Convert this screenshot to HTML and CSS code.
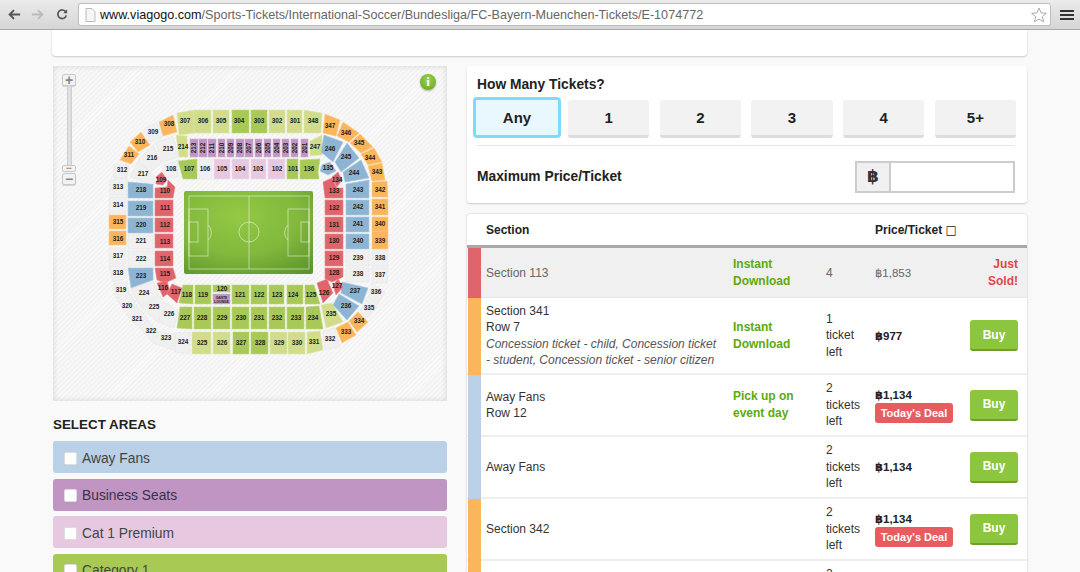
FILE: index.html
```html
<!DOCTYPE html>
<html lang="en">
<head>
<meta charset="utf-8">
<title>FC Bayern Muenchen Tickets</title>
<link rel="stylesheet" href="styles.css">
</head>
<body>
<header class="toolbar">
  <svg class="nav-icon" viewBox="0 0 16 14"><path class="arrow-dark" d="M15 7H4M8 2 3 7l5 5"/></svg>
  <svg class="nav-icon" viewBox="0 0 16 14"><path class="arrow-light" d="M1 7h11M8 2l5 5-5 5"/></svg>
  <svg class="nav-icon reload" viewBox="0 0 14 14"><path class="arrow-dark thin" d="M11.5 4.2A5 5 0 1 0 12 8"/><path class="fill-dark" d="M8.5 5.5 13 1v4.500z"/></svg>
  <div class="urlbar">
    <svg class="file-icon" viewBox="0 0 11 14"><path d="M1 .5h6l3 3v10H1z"/></svg>
    <span class="url"><b>www.viagogo.com</b>/Sports-Tickets/International-Soccer/Bundesliga/FC-Bayern-Muenchen-Tickets/E-1074772</span>
    <svg class="star-icon" viewBox="0 0 16 16"><path d="M8 1l2.100 4.800 5.200.5-3.900 3.400 1.200 5.100L8 12.100l-4.600 2.700 1.200-5.100L.7 6.300l5.200-.5z"/></svg>
  </div>
  <div class="menu"><i></i><i></i><i></i></div>
</header>

<div class="top-card"></div>

<main class="columns">
  <section class="left">
    <div class="map">
      <div class="zoomer">
        <div class="zoom-btn">+</div>
        <div class="zoom-track"></div>
        <div class="zoom-handle">•••</div>
        <div class="zoom-btn minus">−</div>
      </div>
      <div class="info">i</div>
      <svg class="stadium" viewBox="53 66 394 335">
        <defs>
          <radialGradient id="turf" cx="0.42" cy="0.3" r="0.85">
            <stop offset="0" stop-color="#93c943"/>
            <stop offset="0.55" stop-color="#82b83c"/>
            <stop offset="1" stop-color="#5d962c"/>
          </radialGradient>
        </defs>
        <rect x="184" y="191" width="129" height="83" rx="2" fill="url(#turf)"/>
        <g class="lines">
          <rect x="189" y="196" width="120" height="73"/>
          <path d="M249 196v73"/>
          <circle cx="249" cy="232" r="10"/>
          <rect x="189" y="209" width="19" height="47"/>
          <rect x="189" y="222" width="9" height="20"/>
          <path d="M208 225a10 10 0 0 1 0 15"/>
          <rect x="288" y="209" width="21" height="47"/>
          <rect x="301" y="222" width="8" height="20"/>
          <path d="M288 225a10 10 0 0 0 0 15"/>
        </g>

        <g class="lg">
          <polygon points="177,113 194,110 195,133 179,135"/>
          <rect x="194" y="110" width="17" height="23"/>
          <rect x="213" y="110" width="16" height="23"/>
          <rect x="269" y="110" width="16" height="23"/>
          <rect x="287" y="110" width="15" height="23"/>
          <polygon points="304,110 322,113 321,133 304,133"/>
          <polygon points="176,135 187,136 188,157 179,157"/>
          <polygon points="322,135 322,155 310,156 310,141"/>
          <rect x="192" y="332" width="19" height="22"/>
          <rect x="213" y="332" width="17" height="22"/>
          <rect x="270" y="332" width="17" height="22"/>
          <rect x="288" y="332" width="17" height="22"/>
          <polygon points="307,332 320,331 323,350 307,354"/>
          <polygon points="332,303 343,322 326,328 321,305"/>
        </g>
        <g class="mg">
          <rect x="232" y="110" width="17" height="23"/>
          <rect x="251" y="110" width="16" height="23"/>
          <polygon points="178,161 197,159 197,179 183,179 182,175"/>
          <rect x="287" y="159" width="11" height="20"/>
          <polygon points="300,160 320,159 318,172 319,179 300,179"/>
          <rect x="233" y="332" width="16" height="22"/>
          <rect x="251" y="332" width="17" height="22"/>
          <polygon points="177,328 180,307 192,307 192,329"/>
          <rect x="194" y="307" width="17" height="22"/>
          <rect x="213" y="307" width="17" height="22"/>
          <rect x="232" y="307" width="17" height="22"/>
          <rect x="251" y="307" width="16" height="22"/>
          <rect x="269" y="307" width="16" height="22"/>
          <rect x="287" y="307" width="17" height="22"/>
          <polygon points="306,307 319,306 323,329 306,329"/>
          <polygon points="179,303 183,285 193,285 193,304"/>
          <rect x="195" y="285" width="16" height="19"/>
          <rect x="213" y="285" width="17" height="7"/>
          <rect x="232" y="285" width="17" height="19"/>
          <rect x="251" y="285" width="16" height="19"/>
          <rect x="269" y="285" width="15" height="19"/>
          <rect x="287" y="285" width="16" height="19"/>
          <polygon points="305,285 314,285 320,304 305,304"/>
        </g>
        <g class="pu">
          <rect x="190" y="139" width="8" height="18"/>
          <rect x="199" y="139" width="8" height="18"/>
          <rect x="208" y="139" width="8" height="18"/>
          <rect x="218" y="139" width="7" height="18"/>
          <rect x="227" y="139" width="7" height="18"/>
          <rect x="236" y="139" width="8" height="18"/>
          <rect x="245" y="139" width="8" height="18"/>
          <rect x="255" y="139" width="7" height="18"/>
          <rect x="264" y="139" width="7" height="18"/>
          <rect x="273" y="139" width="7" height="18"/>
          <rect x="282" y="139" width="7" height="18"/>
          <rect x="291" y="139" width="7" height="18"/>
          <rect x="301" y="139" width="7" height="18"/>
          <rect x="213" y="294" width="17" height="10"/>
        </g>
        <g class="pk">
          <rect x="214" y="159" width="16" height="20"/>
          <rect x="232" y="159" width="17" height="20"/>
          <rect x="251" y="159" width="15" height="20"/>
          <rect x="268" y="159" width="17" height="20"/>
        </g>
        <g class="or">
          <polygon points="159,122 173,115 177,132 163,136"/>
          <polygon points="130,142 141,132 150,145 138,152"/>
          <polygon points="120,160 129,146 139,154 131,164"/>
          <rect x="109" y="215" width="17" height="14"/>
          <rect x="109" y="231" width="17" height="14"/>
          <polygon points="336,328 348,322 356,335 342,343"/>
          <polygon points="349,321 358,312 368,322 357,332"/>
          <rect x="372" y="231" width="16" height="18"/>
          <rect x="372" y="217" width="16" height="14"/>
          <rect x="372" y="199" width="16" height="16"/>
          <polygon points="372,182 387,181 388,197 372,197"/>
          <polygon points="368,166 382,163 385,180 372,181"/>
          <polygon points="361,154 374,148 382,162 368,165"/>
          <polygon points="350,143 360,134 373,147 361,153"/>
          <polygon points="337,136 343,122 359,133 349,142"/>
          <polygon points="323,133 325,114 340,120 336,136"/>
        </g>
        <g class="bl">
          <polygon points="324,135 343,142 333,162 321,152"/>
          <polygon points="335,162 347,143 359,158 341,172"/>
          <polygon points="343,172 361,160 369,178 345,182"/>
          <polygon points="346,184 369,180 369,198 346,198"/>
          <rect x="346" y="200" width="23" height="15"/>
          <rect x="346" y="217" width="23" height="15"/>
          <rect x="346" y="234" width="23" height="15"/>
          <polygon points="342,282 368,288 362,304 341,293"/>
          <polygon points="339,294 359,306 347,320 333,305"/>
          <polygon points="322,165 330,162 336,171 328,175 320,171"/>
          <polygon points="128,182 153,184 153,198 128,198"/>
          <rect x="128" y="201" width="25" height="15"/>
          <rect x="128" y="218" width="25" height="15"/>
          <polygon points="128,268 153,268 153,280 131,288"/>
        </g>
        <g class="re">
          <polygon points="156,177 162,172 167,180 163,185 156,184"/>
          <polygon points="155,188 167,187 168,180 175,187 173,198 155,198"/>
          <rect x="155" y="200" width="18" height="16"/>
          <rect x="155" y="218" width="18" height="14"/>
          <rect x="155" y="234" width="18" height="14"/>
          <rect x="155" y="251" width="18" height="15"/>
          <polygon points="155,268 173,268 176,278 165,283 157,280"/>
          <polygon points="157,283 167,281 170,292 163,297"/>
          <polygon points="172,284 182,288 177,303 167,294"/>
          <polygon points="332,177 338,172 342,180 337,187"/>
          <polygon points="323,182 332,178 337,188 343,188 343,198 325,198"/>
          <rect x="325" y="200" width="18" height="15"/>
          <rect x="325" y="217" width="18" height="15"/>
          <rect x="325" y="234" width="18" height="15"/>
          <rect x="325" y="251" width="18" height="15"/>
          <polygon points="325,268 343,268 343,277 332,282 325,279"/>
          <polygon points="333,285 338,279 343,287 336,295"/>
          <polygon points="317,283 327,279 333,293 323,303"/>
        </g>
        <g class="gr">
          <polygon points="143,130 157,122 163,137 150,142"/>
          <polygon points="114,164 129,165 127,177 113,178"/>
          <polygon points="110,180 127,178 127,195 110,195"/>
          <rect x="109" y="197" width="17" height="16"/>
          <rect x="109" y="248" width="17" height="16"/>
          <polygon points="109,266 126,266 127,278 113,282"/>
          <polygon points="113,284 127,281 129,292 117,299"/>
          <polygon points="118,301 130,293 137,305 125,312"/>
          <polygon points="126,314 137,306 147,318 137,326"/>
          <polygon points="139,327 148,320 158,332 152,342"/>
          <polygon points="153,343 160,332 175,334 173,350"/>
          <polygon points="175,333 190,332 190,354 175,352"/>
          <polygon points="323,331 335,328 340,347 325,350"/>
          <polygon points="360,310 367,300 377,307 367,318"/>
          <polygon points="368,298 372,284 385,292 377,305"/>
          <polygon points="372,268 388,268 387,283 372,283"/>
          <rect x="372" y="250" width="16" height="16"/>
          <rect x="346" y="251" width="23" height="15"/>
          <rect x="346" y="268" width="23" height="14"/>
          <polygon points="155,143 173,136 178,157 163,162"/>
          <polygon points="138,160 153,145 162,163 150,172"/>
          <polygon points="130,177 138,162 150,172 158,180 151,184"/>
          <polygon points="164,165 178,160 178,177 168,178 162,172"/>
          <rect x="199" y="159" width="13" height="20"/>
          <rect x="128" y="235" width="25" height="14"/>
          <rect x="128" y="251" width="25" height="15"/>
          <polygon points="131,289 153,281 159,295 140,306"/>
          <polygon points="141,307 160,296 167,305 157,322"/>
          <polygon points="158,322 167,303 178,311 174,328"/>
        </g>

        <g class="labels">
          <text x="185" y="123">307</text><text x="203" y="123">306</text><text x="221" y="123">305</text><text x="239" y="123">304</text><text x="259" y="123">303</text><text x="277" y="123">302</text><text x="295" y="123">301</text><text x="313" y="123">348</text>
          <text x="169" y="126">308</text><text x="153" y="134">309</text><text x="140" y="144">310</text><text x="129" y="157">311</text><text x="122" y="172">312</text><text x="118" y="189">313</text><text x="118" y="207">314</text><text x="118" y="224">315</text><text x="118" y="241">316</text><text x="118" y="258">317</text><text x="118" y="275">318</text><text x="121" y="292">319</text><text x="127" y="308">320</text><text x="137" y="321">321</text><text x="151" y="333">322</text><text x="166" y="340">323</text><text x="183" y="344">324</text>
          <text x="202" y="345">325</text><text x="222" y="345">326</text><text x="241" y="345">327</text><text x="260" y="345">328</text><text x="279" y="345">329</text><text x="297" y="345">330</text><text x="314" y="344">331</text><text x="330" y="341">332</text><text x="346" y="334">333</text><text x="359" y="323">334</text><text x="369" y="310">335</text><text x="376" y="294">336</text><text x="380" y="277">337</text><text x="380" y="260">338</text><text x="380" y="243">339</text><text x="380" y="226">340</text><text x="380" y="209">341</text><text x="380" y="192">342</text><text x="377" y="174">343</text><text x="370" y="160">344</text><text x="359" y="145">345</text><text x="346" y="135">346</text><text x="330" y="128">347</text>
          <text x="183" y="149">214</text><text x="168" y="151">215</text><text x="152" y="160">216</text><text x="143" y="176">217</text><text x="141" y="192">218</text><text x="141" y="210">219</text><text x="141" y="227">220</text><text x="141" y="243">221</text><text x="141" y="261">222</text><text x="141" y="278">223</text><text x="144" y="295">224</text><text x="154" y="309">225</text><text x="169" y="316">226</text><text x="185" y="320">227</text><text x="202" y="320">228</text><text x="222" y="320">229</text><text x="241" y="320">230</text><text x="259" y="320">231</text><text x="277" y="320">232</text><text x="296" y="320">233</text><text x="313" y="320">234</text><text x="331" y="316">235</text><text x="346" y="308">236</text><text x="355" y="293">237</text><text x="358" y="276">238</text><text x="358" y="260">239</text><text x="358" y="243">240</text><text x="358" y="226">241</text><text x="358" y="209">242</text><text x="358" y="192">243</text><text x="354" y="175">244</text><text x="346" y="159">245</text><text x="330" y="151">246</text><text x="315" y="149">247</text>
          <text x="189" y="171">107</text><text x="171" y="171">108</text><text x="205" y="171">106</text><text x="222" y="171">105</text><text x="240" y="171">104</text><text x="258" y="171">103</text><text x="277" y="171">102</text><text x="293" y="171">101</text><text x="309" y="171">136</text><text x="328" y="170">135</text><text x="337" y="182">134</text><text x="334" y="193">133</text><text x="334" y="210">132</text><text x="334" y="227">131</text><text x="334" y="243">130</text><text x="334" y="260">129</text><text x="334" y="275">128</text><text x="337" y="288">127</text><text x="324" y="295">126</text><text x="311" y="297">125</text><text x="293" y="297">124</text><text x="277" y="297">123</text><text x="259" y="297">122</text><text x="240" y="297">121</text><text x="222" y="291">120</text><text x="203" y="297">119</text><text x="187" y="297">118</text><text x="176" y="294">117</text><text x="163" y="290">116</text><text x="165" y="276">115</text><text x="165" y="261">114</text><text x="165" y="244">113</text><text x="165" y="227">112</text><text x="165" y="210">111</text><text x="165" y="193">110</text><text x="161" y="182">109</text>
        </g>
        <g class="labels small">
          <text x="221.500" y="298.500">GÄSTE</text><text x="221.500" y="302.500">LOUNGE</text>
        </g>
        <g class="labels">
          <text transform="translate(196 148) rotate(-90)">213</text><text transform="translate(205 148) rotate(-90)">212</text><text transform="translate(214 148) rotate(-90)">211</text><text transform="translate(223.500 148) rotate(-90)">210</text><text transform="translate(232.500 148) rotate(-90)">209</text><text transform="translate(242 148) rotate(-90)">208</text><text transform="translate(251 148) rotate(-90)">207</text><text transform="translate(260.500 148) rotate(-90)">206</text><text transform="translate(269.500 148) rotate(-90)">205</text><text transform="translate(278.500 148) rotate(-90)">204</text><text transform="translate(287.500 148) rotate(-90)">203</text><text transform="translate(296.500 148) rotate(-90)">202</text><text transform="translate(306.500 148) rotate(-90)">201</text>
        </g>
      </svg>
    </div>
    <h2 class="areas-title">SELECT AREAS</h2>
    <ul class="areas">
      <li class="area area-away"><span class="check"></span>Away Fans</li>
      <li class="area area-business"><span class="check"></span>Business Seats</li>
      <li class="area area-premium"><span class="check"></span>Cat 1 Premium</li>
      <li class="area area-cat1"><span class="check"></span>Category 1</li>
    </ul>
  </section>

  <section class="right">
    <div class="filters">
      <h2 class="filter-title">How Many Tickets?</h2>
      <div class="qty-buttons">
        <button class="qty qty-active">Any</button>
        <button class="qty">1</button>
        <button class="qty">2</button>
        <button class="qty">3</button>
        <button class="qty">4</button>
        <button class="qty">5+</button>
      </div>
      <div class="price-filter">
        <span class="filter-title">Maximum Price/Ticket</span>
        <div class="price-input"><span class="addon">฿</span><span class="field"></span></div>
      </div>
    </div>

    <div class="listing">
      <div class="row head">
        <div class="c-section">Section</div>
        <div class="c-price">Price/Ticket <span class="boxglyph">□</span></div>
      </div>
      <div class="row sold strip-red">
        <div class="c-section">Section 113</div>
        <div class="c-delivery">Instant Download</div>
        <div class="c-qty">4</div>
        <div class="c-price">฿1,853</div>
        <div class="c-action just-sold">Just Sold!</div>
      </div>
      <div class="row tall strip-orange">
        <div class="c-section">Section 341<br>Row 7<br><em>Concession ticket - child, Concession ticket - student, Concession ticket - senior citizen</em></div>
        <div class="c-delivery">Instant Download</div>
        <div class="c-qty">1 ticket left</div>
        <div class="c-price"><strong>฿977</strong></div>
        <div class="c-action"><button class="buy">Buy</button></div>
      </div>
      <div class="row strip-blue">
        <div class="c-section">Away Fans<br>Row 12</div>
        <div class="c-delivery">Pick up on event day</div>
        <div class="c-qty">2 tickets left</div>
        <div class="c-price"><strong>฿1,134</strong><span class="deal">Today's Deal</span></div>
        <div class="c-action"><button class="buy">Buy</button></div>
      </div>
      <div class="row strip-blue">
        <div class="c-section">Away Fans</div>
        <div class="c-delivery"></div>
        <div class="c-qty">2 tickets left</div>
        <div class="c-price"><strong>฿1,134</strong></div>
        <div class="c-action"><button class="buy">Buy</button></div>
      </div>
      <div class="row strip-orange">
        <div class="c-section">Section 342</div>
        <div class="c-delivery"></div>
        <div class="c-qty">2 tickets left</div>
        <div class="c-price"><strong>฿1,134</strong><span class="deal">Today's Deal</span></div>
        <div class="c-action"><button class="buy">Buy</button></div>
      </div>
      <div class="row strip-orange">
        <div class="c-section"></div>
        <div class="c-delivery"></div>
        <div class="c-qty">2 tickets left</div>
        <div class="c-price"></div>
        <div class="c-action"></div>
      </div>
    </div>
  </section>
</main>
</body>
</html>
```
FILE: styles.css
```css
* { box-sizing: border-box; }
html, body { margin: 0; height: 572px; overflow: hidden; }
body {
  background: #f9f9f9;
  color: #333;
  font-family: "Liberation Sans", "DejaVu Sans", Arial, sans-serif;
  font-size: 12px;
}

/* browser toolbar */
.toolbar {
  height: 30px;
  display: flex;
  align-items: center;
  padding: 0 0 0 7px;
  background: linear-gradient(#ebebeb, #d5d5d5);
  border-bottom: 1px solid #a9a9a9;
}
.nav-icon { width: 14px; height: 13px; margin-right: 10px; flex: none; }
.reload { width: 12px; margin: 0 10px 0 1px; }
.arrow-dark { fill: none; stroke: #555; stroke-width: 2.2; }
.arrow-dark.thin { stroke-width: 2; }
.arrow-light { fill: none; stroke: #bcbcbc; stroke-width: 2.2; }
.fill-dark { fill: #555; }
.urlbar {
  width: 973px;
  height: 23px;
  flex: none;
  display: flex;
  align-items: center;
  background: #fff;
  border: 1px solid #bdbdbd;
  border-radius: 3px;
  padding: 0 3px 0 6px;
}
.file-icon { width: 11px; height: 14px; fill: #f6f6f6; stroke: #bbb; stroke-width: 1; flex: none; }
.url { margin-left: 4px; font-size: 12.600px; color: #666; white-space: nowrap; flex: 1; }
.url b { font-weight: 400; color: #111; }
.star-icon { width: 16px; height: 16px; fill: #fff; stroke: #aaa; stroke-width: 1; flex: none; }
.menu { margin-left: 9px; width: 14px; display: flex; flex-direction: column; gap: 2px; }
.menu i { height: 2px; background: #333; display: block; }

/* page */
.top-card {
  width: 975px;
  height: 26px;
  margin-left: 52px;
  background: #fff;
  border-radius: 0 0 4px 4px;
  box-shadow: 0 1px 2px rgba(0, 0, 0, .2);
}
.columns { display: flex; gap: 20px; margin: 10px 0 0 53px; align-items: flex-start; }
.left { width: 394px; flex: none; }
.right { width: 560px; flex: none; }

/* map */
.map {
  position: relative;
  height: 335px;
  background: repeating-linear-gradient(135deg, #f3f3f3 0 2px, #f9f9f9 2px 3.500px);
  box-shadow: inset 0 0 6px rgba(0, 0, 0, .14);
}
.stadium { position: absolute; inset: 0; width: 394px; height: 335px; }
.stadium polygon, .stadium rect { stroke-width: .6; }
.lg { fill: #d1dd8d; stroke: #e0e8ad; }
.mg { fill: #a8c957; stroke: #bcd57e; }
.pu { fill: #c095c3; stroke: #d2b3d4; }
.pk { fill: #e6c9e1; stroke: #efdcec; }
.or { fill: #fbb65c; stroke: #fcc987; }
.bl { fill: #8db5d3; stroke: #a9c8df; }
.re { fill: #df656a; stroke: #e88a8e; }
.gr { fill: #f0f0f0; stroke: #e6e6e6; }
.lines rect, .lines circle, .lines path { fill: none; stroke: rgba(255, 255, 255, .55); stroke-width: .9; }
.labels text {
  font-family: "Liberation Sans", Arial, sans-serif;
  font-size: 6.400px;
  font-weight: 700;
  text-anchor: middle;
  fill: #222;
  stroke: none;
}
.labels.small text { font-size: 3.400px; }

.zoomer { position: absolute; left: 9px; top: 8px; width: 14px; z-index: 2; }
.zoom-btn {
  height: 12px;
  background: #f2f2f2;
  border: 1px solid #c8c8c8;
  border-radius: 2px;
  box-shadow: 0 1px 1px rgba(0, 0, 0, .15);
  color: #888;
  font-size: 14px;
  font-weight: 700;
  line-height: 10px;
  text-align: center;
}
.zoom-btn.minus { height: 12px; margin-top: 1px; }
.zoom-track { width: 5px; height: 79px; margin-left: 4.500px; background: #e0e0e0; border: 1px solid #cfcfcf; border-width: 0 1px; }
.zoom-handle {
  height: 7px;
  background: #f2f2f2;
  border: 1px solid #c8c8c8;
  border-radius: 2px;
  color: #777;
  font-size: 5px;
  line-height: 5px;
  text-align: center;
}
.info {
  position: absolute;
  left: 367px;
  top: 8px;
  width: 16px;
  height: 16px;
  border-radius: 50%;
  background: radial-gradient(circle at 50% 35%, #9ad24a, #5fa31f);
  box-shadow: 0 1px 2px rgba(0, 0, 0, .3);
  color: #fff;
  font-family: "Liberation Serif", serif;
  font-size: 13px;
  font-weight: 700;
  line-height: 16px;
  text-align: center;
}

/* areas */
.areas-title { margin: 15.500px 0 0; font-size: 13.400px; line-height: 16px; color: #222; font-weight: 700; }
.areas { list-style: none; margin: 7.500px 0 0; padding: 1px 0 0; display: flex; flex-direction: column; gap: 5.500px; }
.area {
  height: 32px;
  display: flex;
  align-items: center;
  gap: 5.500px;
  padding: 2px 0 0 10.500px;
  border-radius: 3px;
  font-size: 13.800px;
  color: #444;
}
.check { width: 13px; height: 13px; background: #fff; border: 1px solid #ddd; border-radius: 2px; flex: none; }
.area-away { background: #b9d0e6; }
.area-business { background: #c095c3; color: #3c3046; }
.area-premium { background: #e6c9e1; }
.area-cat1 { background: #a9c955; }

/* filters */
.filters {
  height: 137px;
  background: #fff;
  border-radius: 3px;
  box-shadow: 0 1px 2px rgba(0, 0, 0, .2);
  padding: 11px 11px 0 10px;
}
.filter-title { margin: 0; font-size: 13.800px; line-height: 16px; font-weight: 700; color: #222; }
.qty-buttons {
  display: flex;
  gap: 10.500px;
  margin: 4px 0 0 -4px;
  height: 49px;
}
.qty {
  flex: 1;
  height: 38px;
  margin-top: 3px;
  background: #f2f2f2;
  border: 0;
  border-bottom: 3px solid #ddd;
  border-radius: 3px;
  font: 700 15px "Liberation Sans", Arial, sans-serif;
  color: #222;
  padding: 0;
}
.qty-active {
  flex: 0 0 88px;
  height: 41px;
  margin: 0 -3.500px 0 0;
  background: #e9f8fe;
  border: 3px solid #7fdbfb;
  border-radius: 4px;
}
.price-filter {
  display: flex;
  align-items: center;
  justify-content: space-between;
  height: 58px;
  margin: -1px 1px 0 0;
  padding-top: 4px;
  border-top: 1px solid #e8e8e8;
}
.price-input { width: 160px; height: 32px; display: flex; border: 2px solid #ccc; background: #fff; }
.addon {
  width: 34px;
  background: #f0f0f0;
  border-right: 2px solid #ccc;
  font-size: 17px;
  font-weight: 700;
  line-height: 28px;
  text-align: center;
  color: #333;
}
.field { flex: 1; }

/* ticket table */
.listing {
  margin-top: 11px;
  background: #fff;
  border-radius: 3px;
  box-shadow: 0 0 2px rgba(0, 0, 0, .25);
}
.row {
  display: grid;
  grid-template-columns: 247px 93px 49px 95px 1fr;
  align-items: center;
  height: 62px;
  padding: 0 9px 0 19px;
  border-bottom: 2px solid #eee;
  position: relative;
  line-height: 16.500px;
}
.row::before { content: ""; position: absolute; left: 1px; top: 0; bottom: -2px; width: 13px; }
.strip-red::before { background: #e0656a; }
.strip-orange::before { background: #fbb65c; }
.strip-blue::before { background: #b9d0e6; }
.head {
  height: 34px;
  padding-top: 1px;
  border-bottom: 3px solid #a8a8a8;
  font-weight: 700;
  color: #222;
  grid-template-columns: 389px 1fr;
  border-radius: 3px 3px 0 0;
}
.sold { height: 50px; background: #f0f0f0; color: #666; border-bottom: 1px solid #e8e8e8; }
.tall { height: 77px; }
.c-section { padding-right: 14px; }
.c-section em { color: #555; }
.sold .c-section, .sold .c-qty, .sold .c-price { padding-top: 1px; }
.c-delivery { color: #5cab0c; font-weight: 700; line-height: 17px; padding-right: 8px; }
.c-qty { width: min-content; line-height: 16.500px; }
.c-price { display: flex; flex-direction: column; align-items: flex-start; font-size: 11.500px; line-height: 14px; }
.head .c-price { display: block; font-size: 12px; }
.c-price strong { color: #222; }
.boxglyph { font-weight: 400; font-family: "DejaVu Sans", sans-serif; }
.c-action { text-align: right; }
.just-sold { color: #e4444c; font-weight: 700; line-height: 17px; padding-left: 15px; }
.buy {
  width: 48px;
  height: 31px;
  background: #8cc63f;
  border: 0;
  border-bottom: 2px solid #6c9f2b;
  border-radius: 3px;
  color: #fff;
  font: 700 12px "Liberation Sans", Arial, sans-serif;
  padding: 0;
}
.deal {
  width: 78px;
  height: 20px;
  margin-top: 1px;
  background: #e85c5f;
  border-radius: 3px;
  color: #fff;
  font-size: 11px;
  font-weight: 700;
  line-height: 20px;
  text-align: center;
}
```
